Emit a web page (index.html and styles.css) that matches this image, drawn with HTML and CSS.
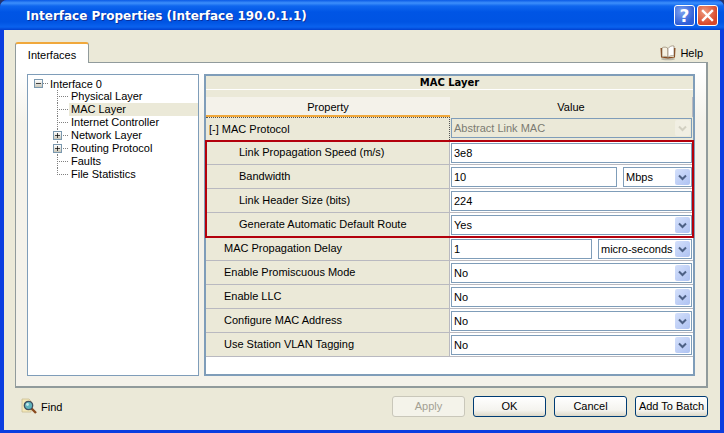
FILE: index.html
```html
<!DOCTYPE html>
<html lang="en">
<head>
    <meta charset="UTF-8">
    <title>Interface Properties</title>
    <link rel="stylesheet" href="styles.css">
</head>
<body>
    <div class="window">
        <div class="titlebar">
            <span class="title">Interface Properties (Interface 190.0.1.1)</span>
            <div class="title-btn help-btn">?</div>
            <div class="title-btn close-btn">
                <svg width="13" height="13" viewBox="0 0 13 13"><path d="M2 2 L11 11 M11 2 L2 11" stroke="#fff" stroke-width="2.4" stroke-linecap="square"/></svg>
            </div>
        </div>

        <div class="content">
            <div class="tab-row">
                <div class="tab">Interfaces</div>
                <div class="help-link">
                    <svg width="16" height="17" viewBox="0 0 16 17">
                        <ellipse cx="8" cy="15" rx="7" ry="1.3" fill="#b9b6a6"/>
                        <path d="M0.5 4 L1 13.5 L8 14.5 L15 13.5 L15.5 4 L14 4 L14 13 L2 13 L2 4 Z" fill="#8a4a1e"/>
                        <path d="M2 4 C4 2.5 6.5 3 8 4.5 L8 13.5 C6.5 12.2 4 12 2 12.8 Z" fill="#f6f1e2" stroke="#7c6a52" stroke-width=".6"/>
                        <path d="M14 2 C11.5 1.5 9.5 2.5 8 4.5 L8 13.5 C9.5 11.8 11.5 11.2 14 12 Z" fill="#fff" stroke="#7c6a52" stroke-width=".6"/>
                    </svg>
                    <span>Help</span>
                </div>
            </div>

            <div class="panel">
                <div class="tree">
                    <div class="node root">
                        <span class="expander"><svg width="7" height="7" viewBox="0 0 7 7"><path d="M0 3.5 H7" stroke="#000"/></svg></span>
                        <span class="stub"></span>
                        <span>Interface 0</span>
                    </div>
                    <div class="node"><span class="twig"></span><span class="label">Physical Layer</span></div>
                    <div class="node"><span class="twig"></span><span class="label selected">MAC Layer</span></div>
                    <div class="node"><span class="twig"></span><span class="label">Internet Controller</span></div>
                    <div class="node"><span class="twig"><span class="expander"><svg width="7" height="7" viewBox="0 0 7 7"><path d="M0 3.5 H7 M3.5 0 V7" stroke="#000"/></svg></span></span><span class="label">Network Layer</span></div>
                    <div class="node"><span class="twig"><span class="expander"><svg width="7" height="7" viewBox="0 0 7 7"><path d="M0 3.5 H7 M3.5 0 V7" stroke="#000"/></svg></span></span><span class="label">Routing Protocol</span></div>
                    <div class="node"><span class="twig"></span><span class="label">Faults</span></div>
                    <div class="node"><span class="twig last"></span><span class="label">File Statistics</span></div>
                </div>

                <div class="props">
                    <div class="props-title">MAC Layer</div>
                    <div class="props-gap"></div>
                    <div class="row head">
                        <div class="head-name">Property</div>
                        <div class="head-value">Value</div>
                    </div>

                    <div class="row proto">
                        <div class="name">[-] MAC Protocol</div>
                        <div class="value">
                            <div class="field combo off"><span>Abstract Link MAC</span><span class="arrow"><svg width="9" height="7" viewBox="0 0 9 7"><path d="M1 1.5 L4.5 5 L8 1.5" fill="none" stroke="#d2d0c2" stroke-width="2"/></svg></span></div>
                        </div>
                    </div>

                    <div class="group">
                        <div class="row">
                            <div class="name deep">Link Propagation Speed (m/s)</div>
                            <div class="value"><div class="field">3e8</div></div>
                        </div>
                        <div class="row">
                            <div class="name deep">Bandwidth</div>
                            <div class="value">
                                <div class="field">10</div>
                                <div class="field combo unit-s"><span>Mbps</span><span class="arrow"><svg width="9" height="7" viewBox="0 0 9 7"><path d="M1 1.5 L4.5 5 L8 1.5" fill="none" stroke="#4d6185" stroke-width="2"/></svg></span></div>
                            </div>
                        </div>
                        <div class="row">
                            <div class="name deep">Link Header Size (bits)</div>
                            <div class="value"><div class="field">224</div></div>
                        </div>
                        <div class="row">
                            <div class="name deep">Generate Automatic Default Route</div>
                            <div class="value">
                                <div class="field combo"><span>Yes</span><span class="arrow"><svg width="9" height="7" viewBox="0 0 9 7"><path d="M1 1.5 L4.5 5 L8 1.5" fill="none" stroke="#4d6185" stroke-width="2"/></svg></span></div>
                            </div>
                        </div>
                    </div>

                    <div class="row">
                        <div class="name">MAC Propagation Delay</div>
                        <div class="value">
                            <div class="field">1</div>
                            <div class="field combo unit-l"><span>micro-seconds</span><span class="arrow"><svg width="9" height="7" viewBox="0 0 9 7"><path d="M1 1.5 L4.5 5 L8 1.5" fill="none" stroke="#4d6185" stroke-width="2"/></svg></span></div>
                        </div>
                    </div>
                    <div class="row">
                        <div class="name">Enable Promiscuous Mode</div>
                        <div class="value"><div class="field combo"><span>No</span><span class="arrow"><svg width="9" height="7" viewBox="0 0 9 7"><path d="M1 1.5 L4.5 5 L8 1.5" fill="none" stroke="#4d6185" stroke-width="2"/></svg></span></div></div>
                    </div>
                    <div class="row">
                        <div class="name">Enable LLC</div>
                        <div class="value"><div class="field combo"><span>No</span><span class="arrow"><svg width="9" height="7" viewBox="0 0 9 7"><path d="M1 1.5 L4.5 5 L8 1.5" fill="none" stroke="#4d6185" stroke-width="2"/></svg></span></div></div>
                    </div>
                    <div class="row">
                        <div class="name">Configure MAC Address</div>
                        <div class="value"><div class="field combo"><span>No</span><span class="arrow"><svg width="9" height="7" viewBox="0 0 9 7"><path d="M1 1.5 L4.5 5 L8 1.5" fill="none" stroke="#4d6185" stroke-width="2"/></svg></span></div></div>
                    </div>
                    <div class="row">
                        <div class="name">Use Station VLAN Tagging</div>
                        <div class="value"><div class="field combo"><span>No</span><span class="arrow"><svg width="9" height="7" viewBox="0 0 9 7"><path d="M1 1.5 L4.5 5 L8 1.5" fill="none" stroke="#4d6185" stroke-width="2"/></svg></span></div></div>
                    </div>
                </div>
            </div>

            <div class="footer">
                <div class="find">
                    <svg width="17" height="17" viewBox="0 0 17 17">
                        <path d="M1 1 H8 L10 3 V14 H1 Z" fill="#f5e9b8" stroke="#c9bd96" stroke-width=".8"/>
                        <path d="M10 10 L15 15" stroke="#8a4a1e" stroke-width="2.4"/>
                        <circle cx="7.5" cy="7.5" r="4.2" fill="#5fb4bd" stroke="#3f4f60" stroke-width="1.3"/>
                        <circle cx="6.5" cy="6.5" r="1.4" fill="#c4e8ea"/>
                    </svg>
                    <span>Find</span>
                </div>
                <div class="buttons">
                    <div class="btn disabled">Apply</div>
                    <div class="btn">OK</div>
                    <div class="btn">Cancel</div>
                    <div class="btn">Add To Batch</div>
                </div>
            </div>
        </div>
    </div>
</body>
</html>
```

FILE: styles.css
```css
* {
    box-sizing: border-box;
}
body {
    margin: 0;
    background: #24346e;
    font-family: "Liberation Sans", Arial, sans-serif;
    font-size: 11px;
    color: #000;
}
.window {
    width: 724px;
    height: 433px;
    display: flex;
    flex-direction: column;
    background: #0a3ee0;
    border-radius: 7px 7px 0 0;
    overflow: hidden;
}
.titlebar {
    height: 30px;
    flex: none;
    display: flex;
    align-items: center;
    padding: 1px 6px 0 26px;
    background: linear-gradient(#0a5ae6 0, #3d8ffb 3px, #0f66ee 6px, #0055e5 12px, #0054e3 22px, #0a62ee 27px, #0040d0 30px);
}
.title {
    flex: 1;
    color: #fff;
    font-family: "DejaVu Sans", sans-serif;
    font-weight: bold;
    font-size: 12px;
    text-shadow: 1px 1px 0 #0a2f9c;
}
.title-btn {
    width: 21px;
    height: 21px;
    margin-left: 2px;
    border: 1px solid #fff;
    border-radius: 3px;
    display: flex;
    align-items: center;
    justify-content: center;
}
.help-btn {
    background: radial-gradient(circle at 35% 30%, #7ea2ee, #2f5fd8 70%);
    color: #fff;
    font-size: 17px;
    font-weight: bold;
    font-family: "DejaVu Sans", sans-serif;
}
.close-btn {
    background: radial-gradient(circle at 35% 30%, #ee9a7e, #d8482a 70%);
}
.content {
    flex: 1;
    margin: 0 4px 4px;
    padding: 11px 0 0 11px;
    background: #ebe9d8;
}
.tab-row {
    display: flex;
    align-items: flex-end;
    height: 21px;
    padding-right: 17px;
}
.tab {
    width: 74px;
    height: 21px;
    padding-top: 5px;
    text-align: center;
    background: #fff;
    border: 1px solid #919b9c;
    border-bottom: none;
    border-top: 2px solid #f0a83c;
    border-radius: 3px 3px 0 0;
    margin-bottom: -1px;
    position: relative;
}
.help-link {
    margin-left: auto;
    display: flex;
    align-items: center;
    gap: 4px;
    margin-bottom: 1px;
}
.panel {
    width: 693px;
    height: 326px;
    margin-left: 0;
    padding: 11px 12px 11px 11px;
    display: flex;
    gap: 5px;
    border: 1px solid #919b9c;
    border-right-width: 2px;
    border-bottom-width: 2px;
    background: linear-gradient(#fff 0, #fff 8px, #f4f2ea 60px);
}
.tree {
    width: 172px;
    flex: none;
    height: 302px;
    padding: 2px 0 0 6px;
    background: #fff;
    border: 1px solid #7f9db9;
}
.node {
    height: 13px;
    display: flex;
    align-items: center;
}
.root {
    gap: 0;
}
.stub {
    width: 6px;
    height: 1px;
    margin-left: 0;
    background: repeating-linear-gradient(to right, #808080 0 1px, transparent 1px 2px);
}
.expander {
    width: 9px;
    height: 9px;
    flex: none;
    display: flex;
    align-items: center;
    justify-content: center;
    border: 1px solid #7a98af;
    background: linear-gradient(#fff, #c9c7ba);
}
.expander svg {
    display: block;
    width: 5px;
    height: 5px;
}
.twig {
    width: 11px;
    height: 13px;
    margin-left: 23px;
    margin-right: 2px;
    flex: none;
    display: flex;
    align-items: center;
    background-image:
        repeating-linear-gradient(to bottom, #808080 0 1px, transparent 1px 2px),
        repeating-linear-gradient(to right, #808080 0 1px, transparent 1px 2px);
    background-repeat: no-repeat;
    background-size: 1px 100%, 100% 1px;
    background-position: 0 0, 0 6px;
}
.twig.last {
    background-size: 1px 7px, 100% 1px;
}
.twig .expander {
    margin-left: -4px;
}
.label {
    flex: 1;
    height: 13px;
    line-height: 13px;
    padding-left: 2px;
}
.selected {
    background: #ebe9d8;
}
.node .label {
    margin-left: -1px;
}
.root > span:last-child {
    padding-left: 1px;
}
.props {
    width: 491px;
    height: 302px;
    flex: none;
    padding: 0;
    background: #fff;
    border: 2px solid #7f9db9;
    border-right-width: 2px;
}
.props-title {
    height: 13px;
    line-height: 14px;
    text-align: center;
    font-weight: bold;
    background: #ebe9d8;
    font-family: "DejaVu Sans", sans-serif;
    font-size: 10px;
}
.props-gap {
    height: 8px;
    background: linear-gradient(#fff 0 1px, #ebe9d8 1px);
}
.row {
    height: 24px;
    display: flex;
    border-bottom: 1px solid #b9b9c0;
}
.head {
    height: 20px;
    border-bottom: none;
}
.head-name {
    width: 244px;
    text-align: center;
    line-height: 21px;
    background: #f4f2ea;
    border-bottom: 2px solid #f0a83c;
}
.head-value {
    flex: 1;
    text-align: center;
    line-height: 21px;
    background: #ebe9d8;
    border-right: 1px solid #b9b9c0;
}
.name {
    width: 244px;
    flex: none;
    padding-left: 18px;
    line-height: 23px;
    background: #ebe9d8;
    border-right: 1px solid #b9b9c0;
}
.name.deep {
    padding-left: 33px;
}
.proto .name {
    padding-left: 3px;
    border-top: 1px dotted #555;
    border-right: 1px dotted #555;
}
.value {
    flex: 1;
    display: flex;
    gap: 6px;
    padding: 2px 1px 0 1px;
    background: #fff;
}
.proto .value {
    padding-top: 1px;
    background: #ebe9d8;
}
.field {
    flex: 1;
    height: 20px;
    padding-left: 2px;
    line-height: 19px;
    background: #fff;
    border: 1px solid #7f9db9;
    display: flex;
    align-items: center;
    justify-content: space-between;
}
.combo {
    padding-right: 1px;
}
.unit-s {
    flex: none;
    width: 69px;
}
.unit-l {
    flex: none;
    width: 94px;
}
.off {
    background: #ebe9d8;
    color: #7b7b72;
}
.arrow {
    width: 15px;
    height: 16px;
    display: flex;
    align-items: center;
    justify-content: center;
    border-radius: 2px;
    background: linear-gradient(135deg, #d4e0fb, #aec2f2);
}
.off .arrow {
    background: #f1efe3;
}
.group {
    outline: 2px solid #b3000c;
    outline-offset: -1px;
    position: relative;
}
.group .row:last-child {
    border-bottom: none;
}
.footer {
    height: 42px;
    padding: 8px 0 0 6px;
    display: flex;
    align-items: flex-start;
    justify-content: space-between;
}
.find {
    display: flex;
    align-items: center;
    gap: 3px;
    margin-top: 2px;
}
.buttons {
    display: flex;
    gap: 8px;
    padding-right: 12px;
}
.btn {
    width: 73px;
    height: 21px;
    line-height: 19px;
    text-align: center;
    background: linear-gradient(#fff, #f4f3ee 70%, #dcd8c8);
    border: 1px solid #003c74;
    border-radius: 3px;
}
.btn.disabled {
    color: #a3a093;
    border-color: #c9c7ba;
    background: #f4f3ea;
}
```
